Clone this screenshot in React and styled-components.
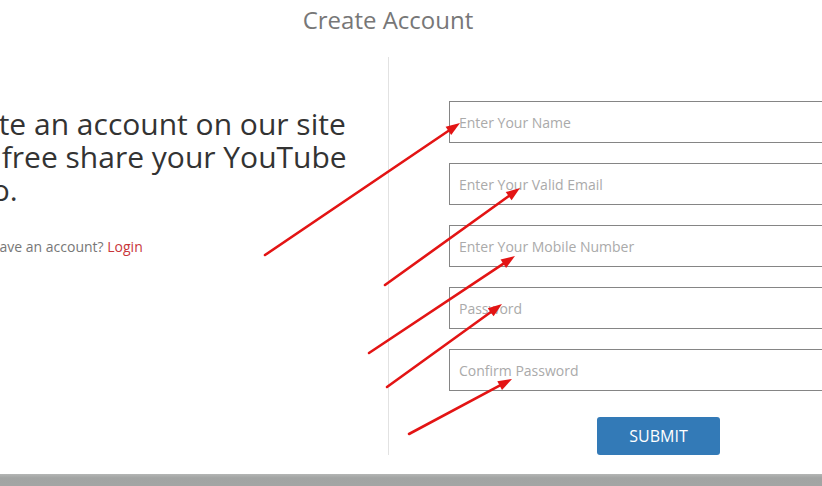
import React from "react";
import styled, { createGlobalStyle } from "styled-components";

const GlobalStyle = createGlobalStyle`
  html, body {
    margin: 0;
    padding: 0;
    background: #fff;
    overflow: hidden;
  }
  body {
    font-family: "Open Sans", "Liberation Sans", sans-serif;
  }
`;

const Page = styled.div`
  position: relative;
  width: 822px;
  height: 486px;
  overflow: hidden;
`;

const Container = styled.div`
  width: 900px;
  margin-left: -62px;
`;

const Title = styled.h1`
  margin: 0;
  padding-top: 7px;
  font-size: 24px;
  line-height: 26px;
  font-weight: 400;
  color: #777;
  text-align: center;
`;

const Row = styled.div`
  display: flex;
  margin-top: 24px;
`;

const LeftCol = styled.div`
  width: 450px;
  padding-top: 50px;
  box-sizing: border-box;
`;

const RightCol = styled.div`
  width: 450px;
  box-sizing: border-box;
  border-left: 1px solid #e2e2e2;
  padding: 44px 15px 0 60px;
  display: flex;
  flex-direction: column;
`;

const Heading = styled.h2`
  margin: 0 0 0 -4px;
  font-size: 30px;
  line-height: 33px;
  font-weight: 400;
  color: #333;
  white-space: nowrap;
`;

const Note = styled.p`
  margin: 31px 0 0;
  font-size: 14px;
  line-height: 20px;
  color: #777;
`;

const LoginLink = styled.a`
  color: #c8363a;
  text-decoration: none;
`;

const Form = styled.form`
  display: flex;
  flex-direction: column;
  gap: 20px;
`;

const Field = styled.input`
  box-sizing: border-box;
  width: 100%;
  height: 42px;
  margin: 0;
  padding: 0 9px;
  border: 1px solid #858585;
  border-radius: 0;
  background: #fff;
  font-family: "Open Sans", "Liberation Sans", sans-serif;
  font-size: 14px;
  color: #555;
  outline: none;
  &::placeholder {
    color: #aaa;
  }
`;

const Submit = styled.button`
  margin: 6px 0 0 148px;
  width: 123px;
  height: 38px;
  border: none;
  border-radius: 3px;
  background: #337ab7;
  color: #fff;
  font-family: "Open Sans", "Liberation Sans", sans-serif;
  font-size: 16px;
  padding: 0;
  cursor: pointer;
`;

const Footer = styled.div`
  margin-top: 19px;
  height: 40px;
  background: linear-gradient(#b4b6b5, #a2a4a3 4px, #a8aaa9);
`;

const Overlay = styled.svg`
  position: absolute;
  left: 0;
  top: 0;
  pointer-events: none;
`;

const arrows = [
  [265, 255, 460, 123],
  [385, 285, 520, 188],
  [369, 353, 515, 256],
  [387, 387, 502, 304],
  [409, 434, 512, 379],
];

function Arrow({ x1, y1, x2, y2 }) {
  const dx = x2 - x1;
  const dy = y2 - y1;
  const len = Math.hypot(dx, dy);
  const ux = dx / len;
  const uy = dy / len;
  const head = 14;
  const half = 5;
  const bx = x2 - ux * head;
  const by = y2 - uy * head;
  const pts = [
    `${x2},${y2}`,
    `${bx - uy * half},${by + ux * half}`,
    `${bx + uy * half},${by - ux * half}`,
  ].join(" ");
  return (
    <g>
      <line x1={x1} y1={y1} x2={bx + ux * 2} y2={by + uy * 2} stroke="#e31414" strokeWidth="2.6" strokeLinecap="round" />
      <polygon points={pts} fill="#e31414" />
    </g>
  );
}

export default function App() {
  return (
    <>
      <GlobalStyle />
      <Page>
        <Container>
          <Title>Create Account</Title>
          <Row>
            <LeftCol>
              <Heading>
                Create an account on our site
                <br />
                with free share your YouTube
                <br />
                video.
              </Heading>
              <Note>
                Already have an account? <LoginLink href="#">Login</LoginLink>
              </Note>
            </LeftCol>
            <RightCol>
              <Form onSubmit={(e) => e.preventDefault()}>
                <Field type="text" placeholder="Enter Your Name" />
                <Field type="email" placeholder="Enter Your Valid Email" />
                <Field type="text" placeholder="Enter Your Mobile Number" />
                <Field type="password" placeholder="Password" />
                <Field type="password" placeholder="Confirm Password" />
                <Submit type="submit">SUBMIT</Submit>
              </Form>
            </RightCol>
          </Row>
        </Container>
        <Footer />
        <Overlay width="822" height="486" viewBox="0 0 822 486">
          {arrows.map(([x1, y1, x2, y2], i) => (
            <Arrow key={i} x1={x1} y1={y1} x2={x2} y2={y2} />
          ))}
        </Overlay>
      </Page>
    </>
  );
}
